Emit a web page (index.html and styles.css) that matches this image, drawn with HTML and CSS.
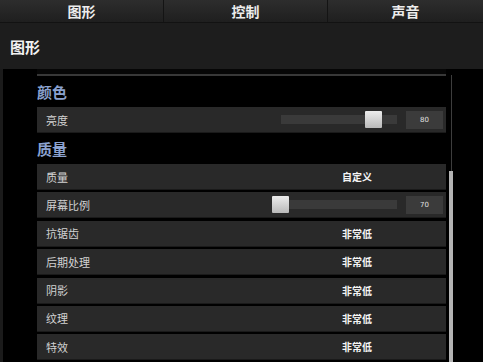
FILE: index.html
```html
<!DOCTYPE html>
<html lang="zh-CN">
<head>
    <meta charset="UTF-8">
    <meta name="viewport" content="width=device-width, initial-scale=1.0">
    <title>设置</title>
    <link rel="stylesheet" href="styles.css">
</head>
<body>
    <div class="tabs">
        <div class="tab">图形</div>
        <div class="tab">控制</div>
        <div class="tab">声音</div>
    </div>
    <div class="page-title">图形</div>

    <div class="main">
        <div class="list">
            <div class="row row-cut"></div>

            <div class="section">颜色</div>
            <div class="row row-slider">
                <span class="label">亮度</span>
                <div class="track">
                    <div class="thumb" style="left: 80%;"></div>
                </div>
                <div class="num">80</div>
            </div>

            <div class="section">质量</div>
            <div class="rows">
                <div class="row row-text">
                    <span class="label">质量</span>
                    <span class="value">自定义</span>
                </div>
                <div class="row row-slider">
                    <span class="label">屏幕比例</span>
                    <div class="track">
                        <div class="thumb" style="left: 0%;"></div>
                    </div>
                    <div class="num">70</div>
                </div>
                <div class="row row-text">
                    <span class="label">抗锯齿</span>
                    <span class="value">非常低</span>
                </div>
                <div class="row row-text">
                    <span class="label">后期处理</span>
                    <span class="value">非常低</span>
                </div>
                <div class="row row-text">
                    <span class="label">阴影</span>
                    <span class="value">非常低</span>
                </div>
                <div class="row row-text">
                    <span class="label">纹理</span>
                    <span class="value">非常低</span>
                </div>
                <div class="row row-text">
                    <span class="label">特效</span>
                    <span class="value">非常低</span>
                </div>
            </div>
        </div>
        <div class="scroll">
            <div class="scroll-thumb"></div>
        </div>
    </div>
</body>
</html>
```

FILE: styles.css
```css
body {
    margin: 0;
    width: 483px;
    height: 362px;
    overflow: hidden;
    background-color: #000;
    font-family: "Noto Sans CJK SC", "Noto Sans", sans-serif;
    color: #fff;
}

.tabs {
    display: grid;
    grid-template-columns: 163px 164px 1fr;
    height: 22px;
    border-bottom: 1px solid #121212;
    background: linear-gradient(#2d2d2d, #1f1f1f);
}

.tab {
    text-align: center;
    font-size: 14px;
    font-weight: bold;
    line-height: 22px;
    color: #ececec;
}

.tab + .tab {
    border-left: 1px solid #141414;
}

.page-title {
    height: 46px;
    line-height: 48px;
    padding-left: 10px;
    background-color: #1d1d1d;
    font-size: 15px;
    font-weight: bold;
    color: #f2f2f2;
}

.main {
    display: flex;
    height: 293px;
    border-left: 3px solid #1b1b1b;
    background-color: #000;
}

.list {
    margin-left: 34px;
    width: 409px;
    overflow: hidden;
}

.rows {
    display: flex;
    flex-direction: column;
    gap: 2.4px;
}

.row {
    display: flex;
    align-items: center;
    box-sizing: border-box;
    height: 26px;
    padding-left: 9px;
    background-color: #292929;
    border-bottom: 1px solid #1a1a1a;
}

.row-cut {
    margin-top: -19px;
    background-color: #060606;
    border-bottom: 2px solid #383838;
}

.section {
    height: 31px;
    line-height: 32px;
    font-size: 15px;
    font-weight: bold;
    color: #8ba2cf;
}

.label {
    flex: 1;
    font-size: 11px;
    color: #d2d2d2;
}

.value {
    width: 100px;
    margin-right: 39px;
    text-align: center;
    font-size: 10px;
    font-weight: bold;
    color: #f4f4f4;
}

.track {
    position: relative;
    width: 116px;
    height: 9px;
    margin-right: 9px;
    background-color: #3a3a3a;
}

.thumb {
    position: absolute;
    top: -4px;
    width: 17px;
    height: 17px;
    margin-left: -9px;
    background: linear-gradient(#ececec, #b9b9b9);
    border-radius: 1px;
}

.num {
    width: 37px;
    height: 18px;
    margin-right: 3px;
    line-height: 18px;
    text-align: center;
    font-family: "DejaVu Sans", sans-serif;
    font-size: 7px;
    color: #e0e0e0;
    background-color: #3b3b3b;
}

.scroll {
    position: relative;
    width: 5px;
    margin-left: 3px;
    margin-top: 6px;
}

.scroll::before {
    content: "";
    position: absolute;
    left: 2px;
    top: 0;
    bottom: 0;
    width: 1px;
    background-color: #3d3d3d;
}

.scroll-thumb {
    position: absolute;
    left: 0;
    top: 96px;
    bottom: 0;
    width: 4px;
    background-color: #b4b4b4;
}
```
